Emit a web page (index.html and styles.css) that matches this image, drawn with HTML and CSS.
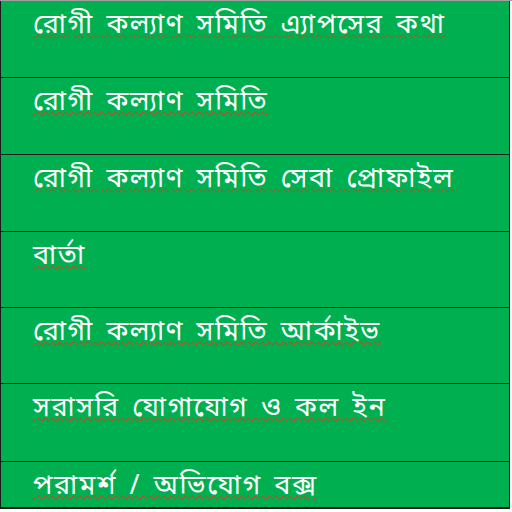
FILE: index.html
```html
<!DOCTYPE html>
<html lang="bn">
<head>
<meta charset="utf-8">
<link rel="stylesheet" href="styles.css">
</head>
<body>
<div class="topline"></div>
<div class="menu">
  <div class="row r1"><span class="label">রোগী কল্যাণ সমিতি এ্যাপসের কথা</span></div>
  <div class="row r2"><span class="label">রোগী কল্যাণ সমিতি</span></div>
  <div class="row r3"><span class="label">রোগী কল্যাণ সমিতি সেবা প্রোফাইল</span></div>
  <div class="row r4"><span class="label">বার্তা</span></div>
  <div class="row r5"><span class="label">রোগী কল্যাণ সমিতি আর্কাইভ</span></div>
  <div class="row r6"><span class="label">সরাসরি যোগাযোগ ও কল ইন</span></div>
  <div class="row r7"><span class="label">পরামর্শ / অভিযোগ বক্স</span></div>
</div>
</body>
</html>
```
FILE: styles.css
```css
html, body {
  margin: 0;
  padding: 0;
  background: #ffffff;
  width: 512px;
  height: 512px;
  overflow: hidden;
}
.topline {
  height: 1px;
  background: #a0a0a0;
}
.menu {
  width: 508px;
  border: 1px solid #1a1a1a;
  border-top: none;
  background: #00b050;
  display: flex;
  flex-direction: column;
}
.row {
  height: 76px;
  border-bottom: 1px solid #1a1a1a;
  padding-left: 32px;
}
.r4, .r5 { height: 75px; }
.r6 { height: 77px; }
.r7 { height: 45px; }
.label {
  display: inline-block;
  margin-top: 8px;
  font-family: "Noto Sans Bengali", "Noto Sans", sans-serif;
  font-size: 27px;
  line-height: 34px;
  letter-spacing: 1.6px;
  word-spacing: 4px;
  color: #ffffff;
  text-decoration: underline wavy #d04020;
  text-decoration-thickness: 1px;
  text-underline-offset: 1px;
}
```
